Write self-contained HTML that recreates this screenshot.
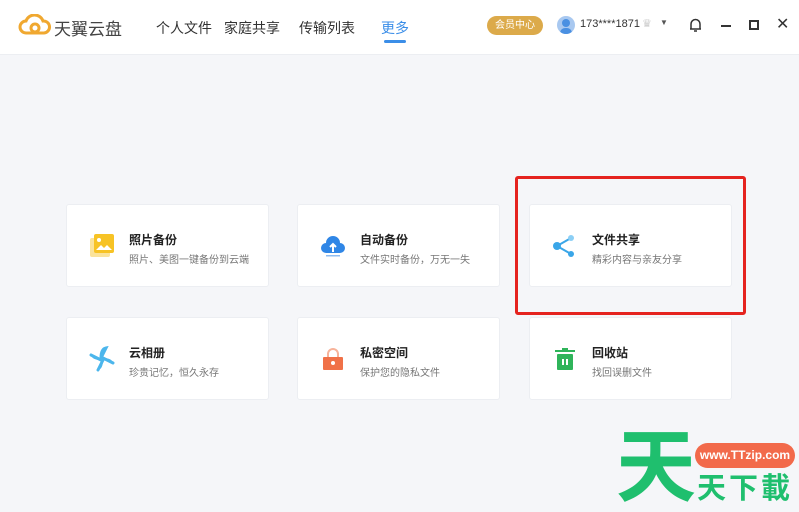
<!DOCTYPE html>
<html><head><meta charset="utf-8"><style>
*{margin:0;padding:0;box-sizing:border-box}
body{width:799px;height:511px;overflow:hidden;background:#f5f6f9;font-family:"Liberation Sans","Noto Sans CJK SC",sans-serif;position:relative}
.hd{position:absolute;left:0;top:0;width:799px;height:55px;background:#fff;border-bottom:1px solid #eceef2}
.a{position:absolute;white-space:nowrap}
.card{position:absolute;background:#fff;border:1px solid #eceef2;border-radius:3px;width:203px;height:83px}
.t{position:absolute;left:62px;top:26px;font-size:12px;color:#222;font-weight:bold}
.s{position:absolute;left:62px;top:46px;font-size:10px;color:#777}
.ic{position:absolute;left:22px;top:28px;width:26px;height:26px}
</style></head><body>
<div class="hd"></div>
<svg class="a" style="left:18px;top:14px" width="34" height="22" viewBox="0 0 34 22"><path d="M8 19a6 6 0 0 1 0-12 9 9 0 0 1 17 0 6 6 0 0 1 1 12z" fill="none" stroke="#f0a830" stroke-width="3"/><circle cx="17" cy="14" r="4" fill="none" stroke="#f0a830" stroke-width="3"/></svg>
<div class="a" style="left:54px;top:15px;font-size:17px;color:#444">天翼云盘</div>
<div class="a" style="left:156px;top:18px;font-size:14px;color:#333">个人文件</div>
<div class="a" style="left:224px;top:18px;font-size:14px;color:#333">家庭共享</div>
<div class="a" style="left:299px;top:18px;font-size:14px;color:#333">传输列表</div>
<div class="a" style="left:381px;top:18px;font-size:14px;color:#3b8ee8">更多</div>
<div class="a" style="left:384px;top:40px;width:22px;height:3px;background:#3b8ee8;border-radius:2px"></div>
<div class="a" style="left:487px;top:16px;width:56px;height:19px;background:#dcaa4a;border-radius:10px;color:#fff;font-size:10px;text-align:center;line-height:19px">会员中心</div>
<div class="a" style="left:557px;top:16px;width:18px;height:18px;border-radius:50%;background:#a8c8f0;overflow:hidden"><div style="position:absolute;left:5px;top:3px;width:8px;height:8px;border-radius:50%;background:#4a90e2"></div><div style="position:absolute;left:3px;top:12px;width:12px;height:10px;border-radius:6px;background:#4a90e2"></div></div>
<div class="a" style="left:580px;top:18px;font-size:11px;color:#333">173****1871</div>
<div class="a" style="left:642px;top:17px;font-size:11px;color:#ccc">♛</div>
<div class="a" style="left:660px;top:18px;font-size:8px;color:#555">▼</div>
<svg class="a" style="left:688px;top:17px" width="15" height="16" viewBox="0 0 15 16"><path d="M3 12V7a4.5 4.5 0 0 1 9 0v5H2h11M6 14h3" fill="none" stroke="#333" stroke-width="1.5"/></svg>
<div class="a" style="left:721px;top:25px;width:10px;height:2px;background:#333"></div>
<div class="a" style="left:749px;top:20px;width:10px;height:10px;border:2px solid #333"></div>
<div class="a" style="left:776px;top:14px;font-size:16px;color:#333">✕</div>

<div class="card" style="left:66px;top:204px"><svg class="ic" viewBox="0 0 26 26"><rect x="1" y="5" width="20" height="19" rx="2" fill="#fbe39a"/><rect x="5" y="1" width="20" height="19" rx="2" fill="#f7c325"/><circle cx="10" cy="7" r="2" fill="#fff"/><path d="M7 17l5-5 3 3 3-3 5 5z" fill="#fff"/></svg><div class="t">照片备份</div><div class="s">照片、美图一键备份到云端</div></div>
<div class="card" style="left:297px;top:204px"><svg class="ic" viewBox="0 0 26 26"><path d="M6 20a5 5 0 0 1 0-10 7 7 0 0 1 14 0 5 5 0 0 1 0 10z" fill="#2f86e6"/><path d="M13 19v-8M10 14l3-3 3 3" stroke="#fff" stroke-width="2" fill="none"/><rect x="6" y="22" width="14" height="1.5" fill="#8dbcf2"/></svg><div class="t">自动备份</div><div class="s">文件实时备份，万无一失</div></div>
<div class="card" style="left:529px;top:204px"><svg class="ic" viewBox="0 0 26 26"><path d="M5 13L19 5M5 13l14 8" stroke="#3aa6e8" stroke-width="2"/><circle cx="5" cy="13" r="4" fill="#3aa6e8"/><circle cx="19" cy="5" r="3" fill="#8ccff5"/><circle cx="19" cy="21" r="3" fill="#3aa6e8"/></svg><div class="t">文件共享</div><div class="s">精彩内容与亲友分享</div></div>
<div class="card" style="left:66px;top:317px"><svg class="ic" viewBox="0 0 26 26"><path d="M12 12Q12 3 17 2Q14 7 12 12z" fill="#4cb6ec"/><path d="M14 12Q23 12 24 17Q19 14 14 12z" fill="#4cb6ec"/><path d="M14 14Q14 23 9 24Q12 19 14 14z" fill="#4cb6ec"/><path d="M12 14Q3 14 2 9Q7 12 12 14z" fill="#4cb6ec"/><path d="M12 12Q12 3 17 2L12 12zM14 12L24 17M14 14L9 24M12 14L2 9" stroke="#4cb6ec" stroke-width="3" fill="none" stroke-linecap="round"/></svg><div class="t">云相册</div><div class="s">珍贵记忆，恒久永存</div></div>
<div class="card" style="left:297px;top:317px"><svg class="ic" viewBox="0 0 26 26"><path d="M8 11V8a5 5 0 0 1 10 0v3" fill="none" stroke="#f7b39a" stroke-width="2"/><rect x="3" y="11" width="20" height="13" rx="1" fill="#f07148"/><circle cx="13" cy="17" r="2" fill="#fff"/></svg><div class="t">私密空间</div><div class="s">保护您的隐私文件</div></div>
<div class="card" style="left:529px;top:317px"><svg class="ic" viewBox="0 0 26 26"><rect x="3" y="4" width="20" height="2" fill="#2fb45a"/><rect x="10" y="2" width="6" height="2" fill="#2fb45a"/><rect x="5" y="8" width="16" height="16" rx="1" fill="#2fb45a"/><rect x="10" y="13" width="2" height="6" fill="#fff"/><rect x="14" y="13" width="2" height="6" fill="#fff"/></svg><div class="t">回收站</div><div class="s">找回误删文件</div></div>

<div class="a" style="left:515px;top:176px;width:231px;height:139px;border:3px solid #e5231f;border-radius:3px"></div>

<div class="a" style="left:616px;top:425px;font-size:80px;line-height:86px;color:#1fbf6e;font-weight:bold">天</div>
<div class="a" style="left:695px;top:443px;width:100px;height:25px;background:#f26a4b;border-radius:13px;color:#fff;font-size:12px;font-weight:bold;text-align:center;line-height:25px">www.TTzip.com</div>
<div class="a" style="left:697px;top:472px;font-size:29px;line-height:34px;color:#1fbf6e;font-weight:bold;letter-spacing:3px">天下載</div>
</body></html>
